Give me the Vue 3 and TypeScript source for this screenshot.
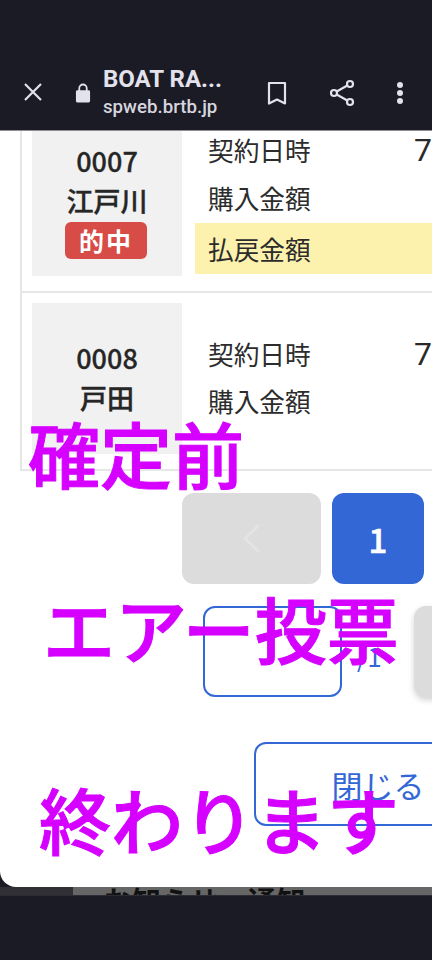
<script setup lang="ts">
interface Row { id: string; place: string; hit: boolean; }
const rows: Row[] = [
  { id: '0007', place: '江戸川', hit: true },
  { id: '0008', place: '戸田', hit: false },
];
</script>

<template>
  <div class="screen">
    <header class="bar">
      <svg class="ic-close" width="24" height="24" viewBox="0 0 24 24" fill="none" stroke="#e3e2ec" stroke-width="2.2"><path d="M4 4l16 16M20 4L4 20" /></svg>
      <svg class="ic-lock" width="16" height="20" viewBox="0 0 17 21"><path fill="#e3e2ec" d="M3.6 7.6V5.4a4.9 4.9 0 0 1 9.8 0v2.2h1.1c.9 0 1.5.7 1.5 1.5v9.9c0 .9-.7 1.5-1.500 1.500H2.500c-.9 0-1.500-.7-1.500-1.500V9.100c0-.9.7-1.500 1.500-1.500h1.100zm1.900 0h6V5.400a3 3 0 0 0-6 0v2.200z" /></svg>
      <div class="title">
        <div class="t1">BOAT RA...</div>
        <div class="t2">spweb.brtb.jp</div>
      </div>
      <svg class="ic-mark" width="20" height="25" viewBox="0 0 20 25" fill="none" stroke="#e3e2ec" stroke-width="2.200"><path d="M2 2h16v20.500l-8-4-8 4z" stroke-linejoin="round" /></svg>
      <svg class="ic-share" width="26" height="28" viewBox="0 0 26 28" fill="none" stroke="#e3e2ec" stroke-width="2.200"><circle cx="21" cy="5" r="3" /><circle cx="5" cy="14" r="3" /><circle cx="21" cy="23" r="3" /><path d="M7.700 12.500l10.600-6M7.700 15.500l10.600 6" /></svg>
      <svg class="ic-dots" width="8" height="24" viewBox="0 0 8 24" fill="#e3e2ec"><circle cx="4" cy="4" r="3" /><circle cx="4" cy="12" r="3" /><circle cx="4" cy="20" r="3" /></svg>
    </header>

    <main class="sheet">
      <section class="table">
        <article v-for="r in rows" :key="r.id" class="row">
          <div class="thumb">
            <div class="num">{{ r.id }}</div>
            <div class="place">{{ r.place }}</div>
            <div v-if="r.hit" class="badge">的中</div>
          </div>
          <div class="details">
            <div class="line"><span class="lab">契約日時</span><span class="val">7/</span></div>
            <div class="line"><span class="lab">購入金額</span></div>
            <div v-if="r.hit" class="line yellow"><span class="lab">払戻金額</span></div>
          </div>
        </article>
      </section>

      <nav class="pager">
        <button class="pg grey" type="button">
          <svg width="19" height="31" viewBox="0 0 19 31" fill="none" stroke="#e4e4e4" stroke-width="2.600"><path d="M17 2L3 15.500 17 29" /></svg>
        </button>
        <button class="pg blue" type="button">1</button>
      </nav>

      <div class="actions">
        <button class="act outline" type="button"></button>
        <span class="count">/1</span>
        <button class="act shade" type="button"></button>
      </div>

      <button class="close" type="button">閉じる</button>
    </main>

    <div class="under">
      <div class="under-left"></div>
      <div class="under-right">お知らせ・通知</div>
    </div>
    <div class="navbar"></div>

    <div class="stamp s1">確定前</div>
    <div class="stamp s2">エアー投票</div>
    <div class="stamp s3">終わります</div>
  </div>
</template>

<style>
html, body { margin: 0; padding: 0; background: #1b1b25; }
</style>

<style scoped>
.screen {
  position: relative;
  width: 432px;
  height: 960px;
  overflow: hidden;
  display: flex;
  flex-direction: column;
  background: #1b1b25;
  font-family: "Noto Sans CJK JP", "Noto Sans", sans-serif;
  color: #2a2a2a;
}
.bar {
  flex: none;
  box-sizing: border-box;
  height: 131px;
  padding-top: 54px;
  display: flex;
  align-items: center;
  background: #1b1b25;
  border-bottom: 1px solid #8e8e98;
  font-family: Roboto, sans-serif;
}
.ic-close { margin-left: 21px; flex: none; width: 24px; }
.ic-lock { margin-left: 30px; margin-top: 1px; flex: none; }
.title { margin-left: 12px; width: 164px; flex: none; }
.t1 { font-size: 24px; line-height: 30px; font-weight: 700; color: #e3e2ec; }
.t2 { font-size: 18.700px; line-height: 26px; font-weight: 500; color: #d6d5df; }
.ic-mark { flex: none; margin-top: 2px; }
.ic-share { margin-left: 42px; flex: none; margin-top: 1px; }
.ic-dots { margin-left: 41px; flex: none; margin-top: 1px; }

.sheet {
  flex: none;
  height: 756px;
  background: #fff;
  overflow: hidden;
  border-radius: 0 0 0 16px;
  position: relative;
  z-index: 1;
}
.table {
  width: 470px;
  margin: -16px 0 0 20px;
  box-sizing: border-box;
  border-left: 2px solid #e6e6e6;
  border-bottom: 2px solid #e6e6e6;
}
.row {
  box-sizing: border-box;
  height: 178px;
  padding: 10px 0 15px 10px;
  display: flex;
  border-bottom: 2px solid #e6e6e6;
}
.row:last-child { height: 176px; border-bottom: none; }
.thumb {
  flex: none;
  width: 150px;
  height: 151px;
  background: #f1f1f1;
  display: flex;
  flex-direction: column;
  align-items: center;
  justify-content: center;
  font-size: 27px;
  color: #262626;
}
.num { line-height: 40px; font-weight: 500; margin-top: -2px; -webkit-text-stroke: 0.3px #262626; }
.place { line-height: 40px; font-weight: 500; -webkit-text-stroke: 0.4px #262626; }
.badge {
  width: 82px;
  height: 37px;
  line-height: 37px;
  border-radius: 6px;
  background: #d84c47;
  color: #fff;
  text-align: center;
  font-size: 25px;
  font-weight: 700;
  letter-spacing: 2px;
  margin-top: 1px;
  margin-left: -2px;
}
.details {
  flex: none;
  width: 260px;
  margin-left: 13px;
  display: flex;
  flex-direction: column;
  justify-content: center;
}
.line {
  height: 47.500px;
  display: grid;
  grid-template-columns: 206px 1fr;
  align-items: center;
  padding-left: 13px;
}
.line .lab, .line .val { position: relative; top: -1px; }
.yellow { height: 51px; background: #fdf2ad; }
.line.yellow .lab { top: 1px; }
.lab { font-size: 25.700px; color: #2c2c2c; line-height: 1; }
.val { font-size: 32px; font-family: Roboto, sans-serif; color: #2a2a2a; line-height: 1; }

.pager {
  margin: 22px 0 0 182px;
  display: flex;
  gap: 11px;
}
.pg, .act, .close {
  flex: none;
  padding: 0;
  box-sizing: border-box;
  font-family: inherit;
  border: none;
  border-radius: 12px;
}
.pg {
  height: 91px;
  display: flex;
  align-items: center;
  justify-content: center;
}
.grey { width: 139px; background: #dcdcdc; }
.blue { width: 92px; background: #3367d6; color: #fff; font-size: 33px; font-weight: 500; -webkit-text-stroke: 0.6px #fff; }

.actions {
  margin: 22px 0 0 203px;
  display: flex;
  align-items: center;
  width: 300px;
}
.act { height: 91px; }
.outline { width: 139px; border: 2px solid #3367d6; background: #fff; }
.count {
  flex: none;
  box-sizing: border-box;
  width: 72px;
  padding-left: 15px;
  padding-top: 8px;
  font-size: 26px;
  color: #3367d6;
  line-height: 1;
}
.shade { width: 120px; background: #dcdcdc; box-shadow: 0 3px 6px rgba(0,0,0,.18); }

.close {
  display: block;
  margin: 45px 0 0 254px;
  width: 248px;
  height: 84px;
  background: #fff;
  border: 2px solid #3367d6;
  color: #3367d6;
  font-size: 31px;
  font-weight: 400;
}

.under {
  flex: none;
  height: 8px;
  display: flex;
  overflow: hidden;
  margin-top: -16px;
  padding-top: 16px;
  box-sizing: content-box;
}
.under-left { flex: none; width: 73px; background: #313135; }
.under-right {
  flex: 1;
  background: #666;
  padding-left: 30px;
  margin-top: -16px;
  padding-top: 9px;
  font-size: 29px;
  line-height: 40px;
  font-weight: 700;
  color: #111;
  white-space: nowrap;
}
.navbar { flex: 1; background: #1b1b25; position: relative; z-index: 1; border-top: 1px solid #2c2c35; }

.stamp {
  position: absolute;
  z-index: 2;
  font-size: 72px;
  line-height: 72px;
  font-weight: 500;
  -webkit-text-stroke: 1px #d500ff;
  color: #d500ff;
  white-space: nowrap;
}
.s1 { left: 28px; top: 416px; }
.s2 { left: 43px; top: 591px; }
.s3 { left: 39px; top: 782px; }
</style>
